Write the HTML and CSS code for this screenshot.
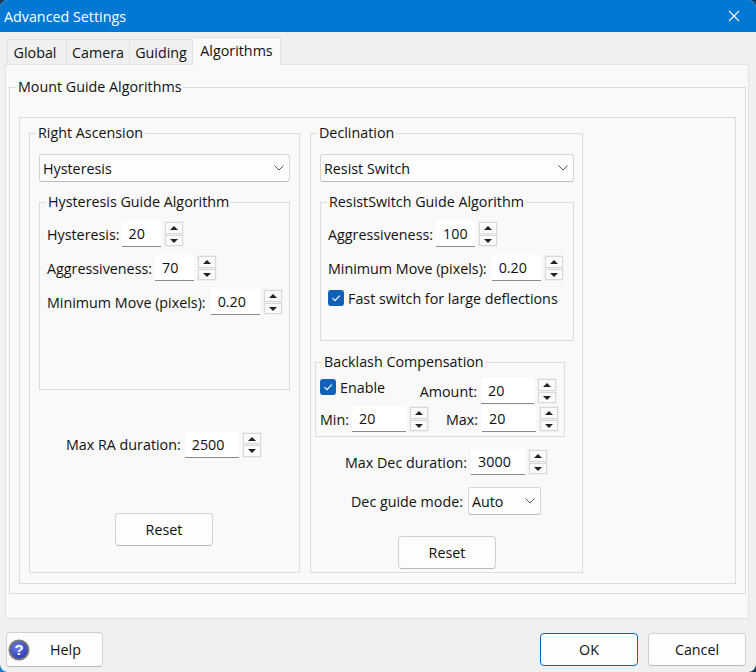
FILE: index.html
```html
<!DOCTYPE html>
<html lang="en">

<head>
    <meta charset="UTF-8">
    <title>Advanced Settings</title>
    <link rel="stylesheet" href="styles.css">
</head>

<body>
    <div class="window">
        <div class="titlebar">
            <span class="title">Advanced Settings</span>
            <svg class="close" width="12" height="12" viewBox="0 0 12 12"><path d="M1 1L11 11M11 1L1 11" stroke="#fff" stroke-width="1.1" fill="none"/></svg>
        </div>

        <div class="tabs">
            <div class="tab tab-global">Global</div>
            <div class="tab tab-camera">Camera</div>
            <div class="tab tab-guiding">Guiding</div>
            <div class="tab tab-active">Algorithms</div>
        </div>

        <div class="panel">
            <fieldset class="group group-mount">
                <legend>Mount Guide Algorithms</legend>
                <div class="inner">
                    <fieldset class="group group-ra">
                        <legend>Right Ascension</legend>
                        <div class="combo combo-wide">Hysteresis
                            <svg class="chevron" width="10" height="6" viewBox="0 0 10 6"><path d="M0.5 0.5L5 5L9.5 0.5" stroke="#555" fill="none"/></svg>
                        </div>
                        <fieldset class="group group-hyst">
                            <legend>Hysteresis Guide Algorithm</legend>
                            <div class="row">
                                <span class="label label-hyst">Hysteresis:</span>
                                <div class="input w40">20</div>
                                <div class="spin"><span class="up"></span><span class="down"></span></div>
                            </div>
                            <div class="row">
                                <span class="label label-aggr">Aggressiveness:</span>
                                <div class="input w40">70</div>
                                <div class="spin"><span class="up"></span><span class="down"></span></div>
                            </div>
                            <div class="row">
                                <span class="label label-move">Minimum Move (pixels):</span>
                                <div class="input w50">0.20</div>
                                <div class="spin"><span class="up"></span><span class="down"></span></div>
                            </div>
                        </fieldset>
                        <div class="row row-ra-max">
                            <span class="label">Max RA duration:</span>
                            <div class="input w54">2500</div>
                            <div class="spin"><span class="up"></span><span class="down"></span></div>
                        </div>
                        <div class="btn btn-reset-ra">Reset</div>
                    </fieldset>

                    <fieldset class="group group-dec">
                        <legend>Declination</legend>
                        <div class="combo combo-wide">Resist Switch
                            <svg class="chevron" width="10" height="6" viewBox="0 0 10 6"><path d="M0.5 0.5L5 5L9.5 0.5" stroke="#555" fill="none"/></svg>
                        </div>
                        <fieldset class="group group-resist">
                            <legend>ResistSwitch Guide Algorithm</legend>
                            <div class="row">
                                <span class="label label-aggr">Aggressiveness:</span>
                                <div class="input w40">100</div>
                                <div class="spin"><span class="up"></span><span class="down"></span></div>
                            </div>
                            <div class="row">
                                <span class="label label-move">Minimum Move (pixels):</span>
                                <div class="input w50">0.20</div>
                                <div class="spin"><span class="up"></span><span class="down"></span></div>
                            </div>
                            <div class="check-row">
                                <span class="check"><svg width="16" height="16" viewBox="0 0 16 16"><path d="M4.5 8.2L7 10.6L11.8 5.6" stroke="#fff" stroke-width="1.1" fill="none"/></svg></span>
                                <span>Fast switch for large deflections</span>
                            </div>
                        </fieldset>
                        <fieldset class="group group-backlash">
                            <legend>Backlash Compensation</legend>
                            <div class="bl-row bl-top">
                                <div class="check-row check-enable">
                                    <span class="check"><svg width="16" height="16" viewBox="0 0 16 16"><path d="M4.5 8.2L7 10.6L11.8 5.6" stroke="#fff" stroke-width="1.1" fill="none"/></svg></span>
                                    <span>Enable</span>
                                </div>
                                <div class="row">
                                    <span class="label">Amount:</span>
                                    <div class="input w53">20</div>
                                    <div class="spin"><span class="up"></span><span class="down"></span></div>
                                </div>
                            </div>
                            <div class="bl-row bl-bottom">
                                <div class="row">
                                    <span class="label label-min">Min:</span>
                                    <div class="input w54">20</div>
                                    <div class="spin"><span class="up"></span><span class="down"></span></div>
                                </div>
                                <div class="row">
                                    <span class="label">Max:</span>
                                    <div class="input w54">20</div>
                                    <div class="spin"><span class="up"></span><span class="down"></span></div>
                                </div>
                            </div>
                        </fieldset>
                        <div class="row row-dec-max">
                            <span class="label">Max Dec duration:</span>
                            <div class="input w54">3000</div>
                            <div class="spin"><span class="up"></span><span class="down"></span></div>
                        </div>
                        <div class="row row-dec-mode">
                            <span class="label label-mode">Dec guide mode:</span>
                            <div class="combo combo-small">Auto
                                <svg class="chevron" width="10" height="6" viewBox="0 0 10 6"><path d="M0.5 0.5L5 5L9.5 0.5" stroke="#555" fill="none"/></svg>
                            </div>
                        </div>
                        <div class="btn btn-reset-dec">Reset</div>
                    </fieldset>
                </div>
            </fieldset>
        </div>

        <div class="footer">
            <div class="btn btn-help">
                <svg class="help-icon" width="22" height="22" viewBox="0 0 22 22">
                    <defs>
                        <radialGradient id="helpFill" cx="0.4" cy="0.35" r="0.7">
                            <stop offset="0" stop-color="#6f7fe8"/>
                            <stop offset="1" stop-color="#2233b0"/>
                        </radialGradient>
                    </defs>
                    <circle cx="11" cy="11" r="9.5" fill="url(#helpFill)" stroke="#77777c" stroke-width="2"/>
                    <text x="11" y="16" text-anchor="middle" class="help-mark">?</text>
                </svg>
                <span>Help</span>
            </div>
            <div class="footer-right">
                <div class="btn btn-ok">OK</div>
                <div class="btn btn-cancel">Cancel</div>
            </div>
        </div>
    </div>
</body>

</html>
```

FILE: styles.css
```css
* {
    box-sizing: border-box;
}

html,
body {
    margin: 0;
    height: 100%;
    overflow: hidden;
}

body {
    font-family: "Open Sans", "Noto Sans", Arial, sans-serif;
    font-size: 14.3px;
    color: #111;
    background: radial-gradient(circle at 0 100%, #1a7fc8 0 12px, #12385c 12px);
}

.window {
    width: 756px;
    height: 672px;
    background-color: #f0f0f0;
    border-radius: 8px;
    overflow: hidden;
}

.titlebar {
    height: 32px;
    background-color: #0078d4;
    color: #fff;
    display: flex;
    align-items: center;
    justify-content: space-between;
    padding: 0 16px 0 4px;
}

.tabs {
    display: flex;
    align-items: flex-end;
    height: 32px;
    padding-left: 7px;
}

.tab {
    height: 25px;
    line-height: 26px;
    text-align: center;
    background-color: #f0f0f0;
    border: 1px solid #e3e3e3;
    border-bottom: none;
    border-left: none;
}

.tab-global {
    width: 60px;
    padding-right: 4px;
    border-left: 1px solid #e3e3e3;
}

.tab-camera {
    width: 63px;
}

.tab-guiding {
    width: 63px;
}

.tab-active {
    position: relative;
    z-index: 1;
    width: 88px;
    height: 28px;
    line-height: 25px;
    margin-bottom: -1px;
    background-color: #f9f9f9;
}

.panel {
    height: 555px;
    margin: 0 7px 0 5px;
    padding: 12px 2px 0 3px;
    background-color: #f9f9f9;
    border: 1px solid #e3e3e3;
}

.group {
    margin: 0;
    padding: 0;
    min-width: 0;
    border: 1px solid #dcdcdc;
}

.group legend {
    padding: 0 2px;
    line-height: 20px;
    white-space: nowrap;
}

.group-mount {
    height: 517px;
    padding: 20px 9px 0 9px;
}

.group-mount > legend,
.group-ra > legend {
    margin-left: -3px;
}

.inner {
    display: flex;
    gap: 10px;
    height: 467px;
    padding: 5px 0 0 9px;
    border: 1px solid #dcdcdc;
}

.group-ra {
    width: 271px;
    height: 450px;
    padding: 11px 9px 0 9px;
}

.group-dec > legend,
.group-backlash > legend {
    margin-left: 2px;
}

.group-dec {
    width: 273px;
    height: 450px;
    padding: 11px 9px 0 4px;
}

.combo {
    position: relative;
    display: flex;
    align-items: center;
    height: 28px;
    padding-left: 3px;
    background-color: #fdfdfd;
    border: 1px solid #d5d5d5;
    border-bottom-color: #bbb;
    border-radius: 3px;
}

.combo-wide {
    width: 251px;
}

.group-dec > .combo-wide {
    width: 254px;
    margin-left: 5px;
}

.combo-small {
    width: 73px;
}

.chevron {
    position: absolute;
    right: 5px;
    top: 10px;
}

.group-hyst {
    width: 251px;
    height: 198px;
    margin-top: 10px;
    padding: 9px 0 0 7px;
}

.group-hyst > legend,
.group-resist > legend {
    margin-left: -1px;
}

.group-resist {
    width: 254px;
    height: 149px;
    margin: 10px 0 0 5px;
    padding: 9px 0 0 7px;
}

.row {
    display: flex;
    align-items: center;
    height: 26px;
    margin-bottom: 8px;
}

.label {
    white-space: nowrap;
    margin-right: 4px;
}

.label-hyst {
    margin-right: 2px;
}

.label-aggr {
    margin-right: 3px;
}

.label-move {
    margin-right: 5px;
}

.label-min {
    margin-right: 3px;
}

.label-mode {
    margin-right: 5px;
}

.input {
    height: 26px;
    padding-left: 7px;
    display: flex;
    align-items: center;
    background-color: #fff;
    border-bottom: 1px solid #8a8a8a;
    border-radius: 2px 2px 0 0;
}

.w40 {
    width: 39px;
}

.w50 {
    width: 49px;
}

.w53 {
    width: 53px;
}

.w54 {
    width: 54px;
}

.spin {
    display: flex;
    flex-direction: column;
    gap: 1px;
    width: 20px;
    height: 26px;
    margin-left: 3px;
    padding: 1px;
    background-color: #f1f1f1;
}

.spin span {
    flex: 1;
    position: relative;
    background-color: #fbfbfb;
    border: 1px solid #d8d8d8;
}

.spin span::after {
    content: "";
    position: absolute;
    left: 4px;
    top: 3px;
    border-left: 4px solid transparent;
    border-right: 4px solid transparent;
}

.spin .up::after {
    border-bottom: 4px solid #222;
}

.spin .down::after {
    border-top: 4px solid #222;
}

.check-row {
    display: flex;
    align-items: center;
    gap: 4px;
    height: 18px;
}

.check {
    width: 16px;
    height: 16px;
    background-color: #0f62b8;
    border-radius: 3px;
}

.check svg {
    display: block;
}

.group-backlash {
    width: 250px;
    height: 85px;
    margin-top: 11px;
    padding: 6px 0 0 4px;
}

.bl-row {
    display: flex;
    justify-content: space-between;
    height: 28px;
}

.bl-row .row {
    margin: 0;
}

.bl-top {
    padding-right: 7px;
}

.bl-bottom {
    padding-right: 5px;
}

.check-enable {
    height: 18px;
}

.row-ra-max {
    margin: 41px 0 0 27px;
    height: 27px;
}

.row-dec-max {
    margin: 12px 0 0 30px;
}

.row-dec-mode {
    margin: 12px 0 0 36px;
    height: 28px;
}

.btn {
    display: flex;
    align-items: center;
    justify-content: center;
    height: 33px;
    background-color: #fdfdfd;
    border: 1px solid #d0d0d0;
    border-bottom-color: #b8b8b8;
    border-radius: 4px;
}

.btn-reset-ra {
    width: 98px;
    margin: 55px 0 0 76px;
}

.btn-reset-dec {
    width: 98px;
    margin: 21px 0 0 83px;
}

.footer {
    display: flex;
    justify-content: space-between;
    padding: 13px 10px 0 6px;
}

.footer-right {
    display: flex;
    gap: 10px;
    padding-top: 1px;
}

.btn-help {
    position: relative;
    width: 97px;
    height: 35px;
    padding-left: 22px;
}

.help-icon {
    position: absolute;
    left: 1px;
    top: 6px;
}

.help-mark {
    font-family: "Liberation Sans", Arial, sans-serif;
    font-size: 15px;
    font-weight: bold;
    fill: #fff;
}

.btn-ok {
    width: 98px;
    border: 1px solid #0067c0;
}

.btn-cancel {
    width: 98px;
}
```
